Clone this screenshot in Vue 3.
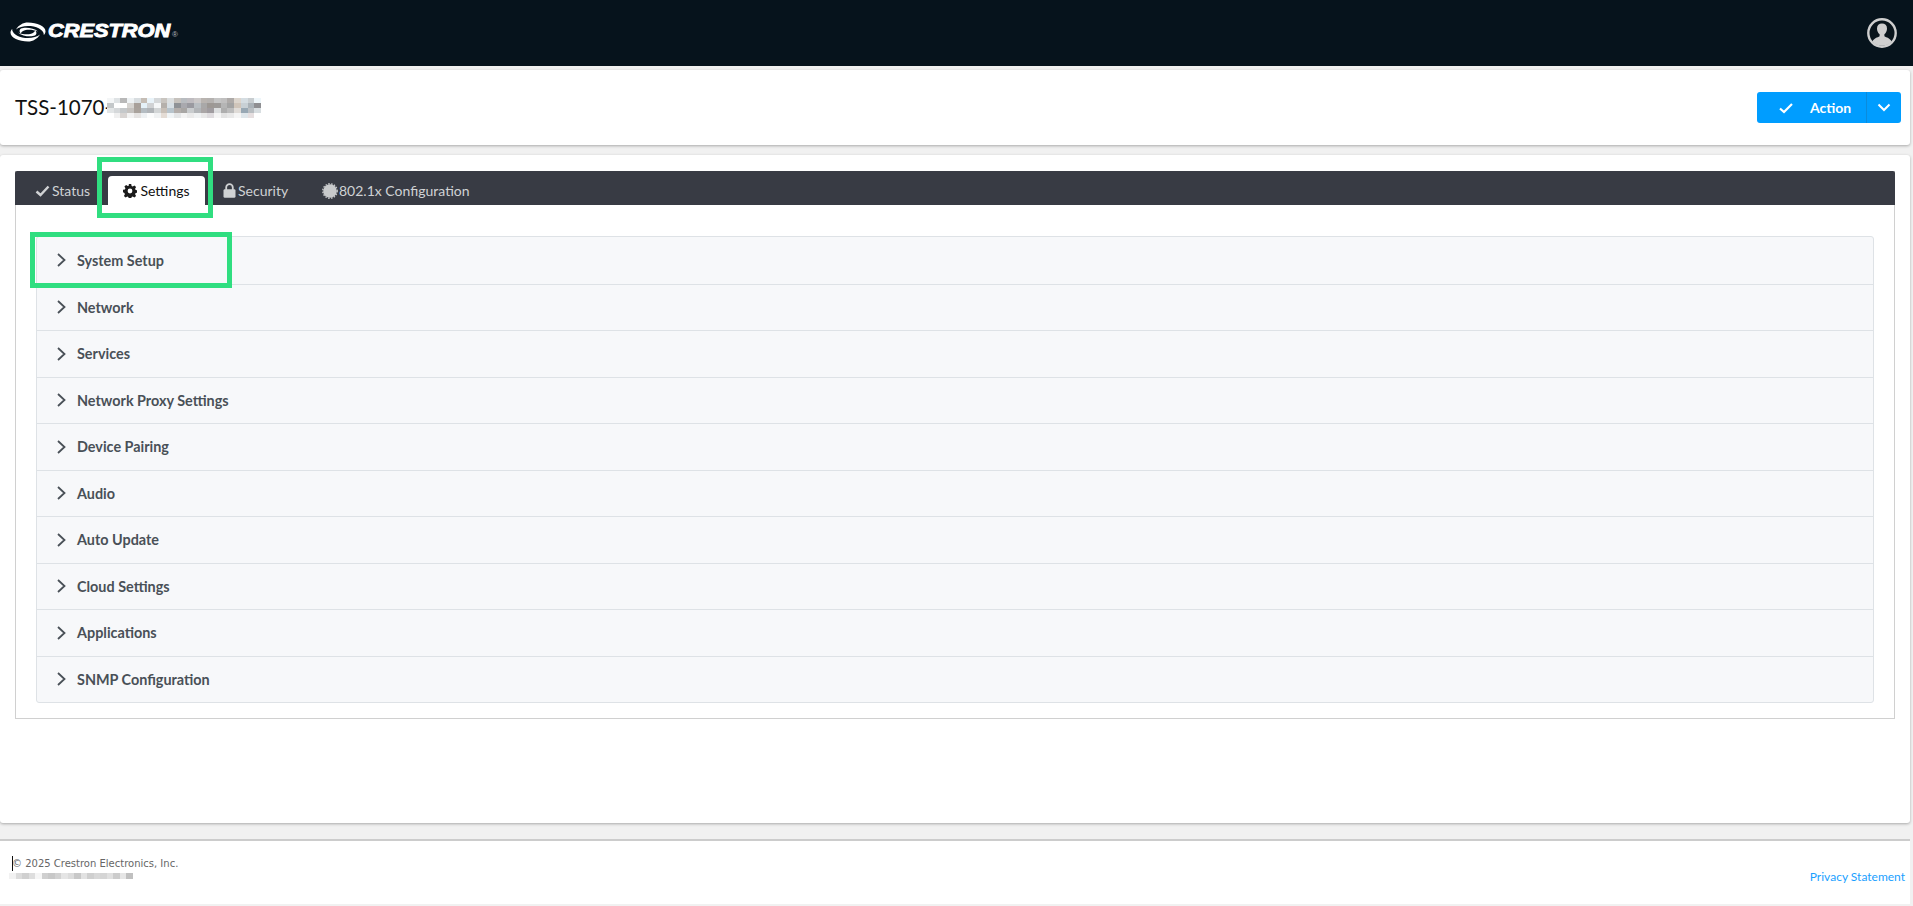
<script setup>
const sections = [
  'System Setup',
  'Network',
  'Services',
  'Network Proxy Settings',
  'Device Pairing',
  'Audio',
  'Auto Update',
  'Cloud Settings',
  'Applications',
  'SNMP Configuration'
]

// blurred serial number, one value per mosaic cell
const titleBlur = [
  'f4f6f7', 'dfe3e5', 'b8b8b8', 'eef2f4', 'd8dde0', 'c5bdb5', 'e9f3f9', 'd5d8da', 'c9c5c0', 'dcdfe0', 'c6c2bd', 'b8bcc0', 'bfbcc0', 'cbc8c8', 'b9b4b0', 'b5b2b0', 'c5c5c5', 'c0bfbf', 'aeaaa8', 'dcd5cd', 'd5dde2', 'c8cdd0', 'eef6fa',
  'c4c8ca', 'ffffff', 'ffffff', 'd5d3d0', 'a8a09a', 'e5f1f8', 'd0d2d4', 'f5f7f8', 'b5b0ab', 'd7dfe4', '8f9296', 'a9a9ae', '9a9aa0', 'b9bec2', 'a9a8a8', '9d9894', '9d9a98', 'b5b5b5', 'a3a3a3', 'd0c5ba', 'c8d0d5', 'aab2b8', '8f8f92',
  'e2e5e6', 'd5d8da', 'c5c8ca', 'c5c2bf', 'a9a29c', 'b4bcc2', 'b0b4b8', 'd2d5d6', 'c8c0b8', 'b8c4cc', 'b3aeab', 'a8a6a4', 'c9ccce', 'b2b5b8', 'aaa6a6', 'a09ca0', 'dcdedf', 'aeaeae', 'bdbdbd', 'e0dcd8', '98a8b4', 'b9bec2', 'd8dee1',
  'ffffff', 'f0f0f0', 'd8d4d2', 'f2f2f2', 'e5e3e2', 'eef1f3', 'fbfcfc', 'f0f2f3', 'e4dcd5', 'f0f4f6', 'e4e6e7', 'f3f3f3', 'eaeaea', 'f0f2f3', 'e8e8e8', 'dfdcdf', 'f5f5f5', 'e3e3e3', 'e9e9e9', 'f5f5f5', 'dfe6ea', 'e6dfe0', 'ffffff'
]
const footerBlur = [
  'f2f2f2', 'dcdcdc', 'd0d0d0', 'dedede', 'f6f6f6', 'cfcfcf', 'c8c8c8', 'd2d2d2', 'e5e5e5', 'dcdcdc', 'c8c8c8', 'e2e2e2', 'cfcfcf', 'd8d8d8', 'd5d5d5', 'e0e0e0', 'cccccc', 'e6e6e6', 'c0c0c0'
]
</script>

<template>
  <div class="page">
    <header class="topbar">
      <div class="logo">
        <svg width="36" height="20" viewBox="0 0 36 20">
          <path fill="#fff" d="M18 .5C27 .5 35.500 4 35.500 9.200c0 1.400-.6 2.700-1.700 3.800.4-3.600-4.600-8-13-8.900C15 3.500 9 4.800 6 7.500 8.500 3.200 13 .5 18 .5Z" />
          <path fill="#fff" d="M18 19.500C9 19.500.5 16 .5 10.800c0-1.400.6-2.700 1.700-3.800-.4 3.600 4.600 8 13 8.900 5.800.6 11.800-.7 14.800-3.400-2.500 4.300-7 7-12 7Z" />
          <path fill="#fff" d="M11 6.400C15 5 24 5.600 28 9.600 24 7.800 20 7.400 17 7.800 14 8.200 11.500 9.500 10.800 11.500 9 9.800 9.200 7.400 11 6.400Z" />
          <path fill="#fff" d="M25 13.600C21 15 12 14.400 8 10.400 12 12.200 16 12.600 19 12.200 22 11.800 24.500 10.500 25.200 8.500 27 10.200 26.800 12.600 25 13.600Z" />
        </svg>
        <span class="logo-name">CRESTRON</span>
        <span class="logo-mark">®</span>
      </div>
      <svg class="avatar" width="30" height="30" viewBox="0 0 30 30">
        <circle cx="15" cy="15" r="13.700" fill="#0a151c" stroke="#cfcfcf" stroke-width="2.400" />
        <path d="M5.500 23.500C7 20 10.500 19.500 12.600 18.200V16.200C11 15 10 12.600 10 10.400 10 7.400 12 5.600 15 5.600S20 7.400 20 10.400C20 12.600 19 15 17.400 16.200V18.200C19.500 19.500 23 20 24.500 23.500 22 26.400 18.700 27.800 15 27.800S8 26.400 5.500 23.500Z" fill="#cfcfcf" />
      </svg>
    </header>

    <section class="title-card">
      <h1 class="device">TSS-1070-</h1>
      <div class="mosaic title-mosaic">
        <i v-for="(c, i) in titleBlur" :key="i" :style="{ background: '#' + c }"></i>
      </div>
      <div class="action">
        <button class="action-main">
          <svg width="16" height="12" viewBox="0 0 16 12" fill="none"><path d="M2 6.500 6 10l8-8" stroke="#fff" stroke-width="2.200" /></svg>
          <span>Action</span>
        </button>
        <button class="action-caret">
          <svg width="14" height="9" viewBox="0 0 14 9" fill="none"><path d="M1.500 1.500 7 7l5.500-5.500" stroke="#fff" stroke-width="2" /></svg>
        </button>
      </div>
    </section>

    <main class="main-card">
      <div class="panel">
        <nav class="tabs">
          <a class="tab">
            <svg width="15" height="12" viewBox="0 0 15 12" fill="none"><path d="M1.500 6.500 5.500 10 13.500 1.500" stroke="#d0d2d4" stroke-width="2.400" /></svg>
            Status
          </a>
          <a class="tab active">
            <svg width="14" height="14" viewBox="0 0 14 14"><path fill="#1b1b1b" fill-rule="evenodd" d="M5.800 0h2.400l.4 1.900 1.100.5 1.700-1 1.700 1.700-1 1.700.5 1.100 1.900.4v2.400l-1.900.4-.5 1.100 1 1.700-1.700 1.700-1.700-1-1.100.5-.4 1.900H5.800l-.4-1.900-1.100-.5-1.700 1-1.700-1.700 1-1.700-.5-1.100L0 8.200V5.800l1.900-.4.5-1.100-1-1.700 1.700-1.700 1.700 1 1.100-.5zM7 4.600a2.400 2.400 0 1 0 0 4.800 2.400 2.400 0 0 0 0-4.800z" /></svg>
            Settings
          </a>
          <a class="tab">
            <svg width="13" height="15" viewBox="0 0 13 15" fill="none"><path d="M3.200 7V4.400a3.300 3.300 0 0 1 6.600 0V7" stroke="#d0d2d4" stroke-width="1.800" /><rect x="0.500" y="6.200" width="12" height="8.600" rx="1.400" fill="#d0d2d4" /></svg>
            Security
          </a>
          <a class="tab tab-last">
            <svg width="16" height="16" viewBox="0 0 16 16"><circle cx="8" cy="8" r="6.800" fill="#c8cacc" /><circle cx="8" cy="8" r="7.200" fill="none" stroke="#c8cacc" stroke-width="1.400" stroke-dasharray="1.500 1.400" /></svg>
            802.1x Configuration
          </a>
        </nav>
        <div class="panel-body">
          <ul class="accordion">
            <li v-for="name in sections" :key="name" class="row">
              <svg width="9" height="14" viewBox="0 0 9 14" fill="none"><path d="M1 1l6.500 6L1 13" stroke="#495057" stroke-width="1.800" /></svg>
              <span>{{ name }}</span>
            </li>
          </ul>
        </div>
      </div>
      <div class="mark mark-tab"></div>
      <div class="mark mark-row"></div>
    </main>

    <footer class="footer">
      <div class="legal">
        <span class="caret"></span>
        <p>© 2025 Crestron Electronics, Inc.</p>
        <div class="mosaic footer-mosaic">
          <i v-for="(c, i) in footerBlur" :key="i" :style="{ background: '#' + c }"></i>
        </div>
      </div>
      <a class="privacy">Privacy Statement</a>
    </footer>
  </div>
</template>

<style>
html, body {
  margin: 0;
  background: #f1f1f1;
}
</style>

<style scoped>
.page {
  height: 906px;
  overflow: hidden;
  font-family: Lato, "Liberation Sans", sans-serif;
  color: #111;
}

.topbar {
  height: 66px;
  background: #06131c;
  display: flex;
  align-items: center;
  justify-content: space-between;
  padding: 0 16px 0 10px;
  box-sizing: border-box;
}

.logo {
  display: flex;
  align-items: center;
  height: 20px;
  margin-top: -3px;
}

.logo-name {
  display: inline-block;
  width: 122px;
  font: italic bold 18px "Liberation Sans", sans-serif;
  color: #fff;
  margin-left: 2px;
  -webkit-text-stroke: 0.9px #fff;
  transform: scaleX(1.21);
  transform-origin: left center;
}

.logo-mark {
  font: 8px "Liberation Sans", sans-serif;
  color: #b5b9bc;
  margin: 6px 0 0 2px;
}

.title-card {
  margin: 4px 3px 0 0;
  height: 75px;
  background: #fff;
  border-radius: 3px;
  box-shadow: 0 1px 3px rgba(0, 0, 0, 0.3);
  display: flex;
  align-items: center;
  padding: 0 9px 0 15px;
  box-sizing: border-box;
}

.device {
  margin: -1px 0 0;
  font-size: 20.5px;
  font-weight: 400;
  color: #111;
}

.mosaic {
  display: grid;
}

.mosaic i {
  display: block;
}

.title-mosaic {
  grid-template-columns: repeat(23, 6.7px);
  grid-auto-rows: 5px;
  margin-left: -5px;
}

.action {
  margin-left: auto;
  display: flex;
  height: 31px;
  border-radius: 3px;
  overflow: hidden;
  background: #009dff;
}

.action button {
  border: 0;
  background: none;
  color: #fff;
  padding: 0;
  display: flex;
  align-items: center;
}

.action-main {
  width: 110px;
  font: 700 14px Lato, sans-serif;
  padding-left: 21px !important;
  gap: 16px;
  box-sizing: border-box;
  border-right: 1px solid #0b8bdc !important;
}

.action-caret {
  width: 34px;
  justify-content: center;
}

.main-card {
  position: relative;
  margin: 10px 3px 0 0;
  height: 668px;
  background: #fff;
  border-radius: 3px;
  box-shadow: 0 1px 3px rgba(0, 0, 0, 0.3);
  padding: 16px 15px 0;
  box-sizing: border-box;
}

.panel {
  border: 1px solid #d0d0d0;
  border-top: 0;
  height: 548px;
  box-sizing: border-box;
}

.tabs {
  height: 34px;
  margin: 0 -1px;
  background: #383b44;
  border-radius: 2px 2px 0 0;
  display: flex;
  align-items: flex-end;
  padding-left: 20px;
}

.tab {
  height: 29px;
  display: flex;
  align-items: center;
  gap: 2px;
  font-size: 14px;
  color: #d0d2d4;
  white-space: nowrap;
}

.tab:nth-child(1) {
  width: 73px;
}

.tab.active {
  width: 97px;
  box-sizing: border-box;
  justify-content: center;
  gap: 3px;
  background: #fff;
  color: #111;
  border-radius: 4px 4px 0 0;
}

.tab:nth-child(3) {
  margin-left: 18px;
  width: 99px;
}

.tab-last {
  gap: 1px;
}

.panel-body {
  padding: 31px 20px 0;
}

.accordion {
  list-style: none;
  margin: 0;
  padding: 0;
  border: 1px solid #dee2e6;
  border-radius: 3px;
  background: #f7f8fa;
}

.row {
  height: 46.500px;
  box-sizing: border-box;
  display: flex;
  align-items: center;
  gap: 11px;
  padding-left: 20px;
  border-top: 1px solid #dee2e6;
  font-size: 14.400px;
  font-weight: 700;
  color: #495057;
}

.row:first-child {
  border-top: 0;
}

.mark {
  position: absolute;
  border: 5px solid #30de80;
  box-sizing: border-box;
}

.mark-tab {
  left: 97px;
  top: 2px;
  width: 116px;
  height: 61px;
}

.mark-row {
  left: 30px;
  top: 77px;
  width: 202px;
  height: 56px;
}

.footer {
  margin: 16px 3px 0 0;
  height: 65px;
  background: #fff;
  border-top: 2px solid #ccc;
  box-sizing: border-box;
  position: relative;
  display: flex;
  justify-content: space-between;
  padding: 0 5px 0 12px;
}

.legal {
  position: relative;
  padding-top: 15px;
}

.legal p {
  margin: 0;
  font: 10px/16px "DejaVu Sans", sans-serif;
  color: #666;
}

.caret {
  position: absolute;
  left: 0;
  top: 15px;
  width: 1px;
  height: 15px;
  background: #111;
}

.footer-mosaic {
  grid-template-columns: repeat(19, 6.5px);
  grid-auto-rows: 6px;
  margin: 1px 0 0 -3px;
}

.privacy {
  align-self: flex-start;
  margin-top: 28px;
  font-size: 12px;
  line-height: 16px;
  color: #1a9fff;
}
</style>
